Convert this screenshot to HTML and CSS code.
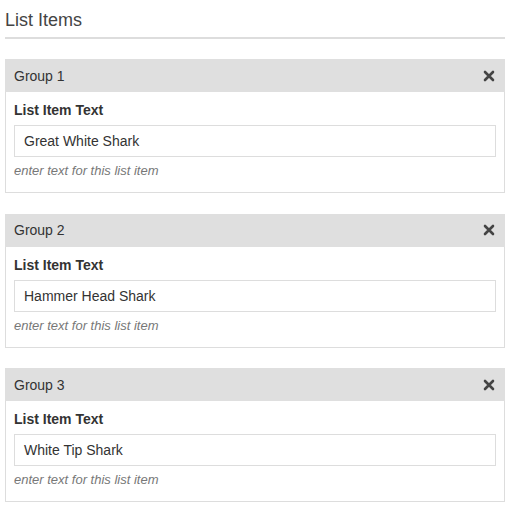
FILE: index.html
```html
<!DOCTYPE html>
<html>
<head>
<meta charset="utf-8">
<link rel="stylesheet" href="styles.css">
</head>
<body>
<div class="page">
  <h2 class="title">List Items</h2>
  <div class="panel">
    <div class="panel-head"><span>Group 1</span><svg class="close" viewBox="0 0 12 12" width="12" height="12"><path d="M2 2L10 10M10 2L2 10" stroke="#444" stroke-width="2.6" stroke-linecap="round"/></svg></div>
    <div class="panel-body">
      <div class="label">List Item Text</div>
      <div class="input">Great White Shark</div>
      <div class="help">enter text for this list item</div>
    </div>
  </div>
  <div class="panel">
    <div class="panel-head"><span>Group 2</span><svg class="close" viewBox="0 0 12 12" width="12" height="12"><path d="M2 2L10 10M10 2L2 10" stroke="#444" stroke-width="2.6" stroke-linecap="round"/></svg></div>
    <div class="panel-body">
      <div class="label">List Item Text</div>
      <div class="input">Hammer Head Shark</div>
      <div class="help">enter text for this list item</div>
    </div>
  </div>
  <div class="panel">
    <div class="panel-head"><span>Group 3</span><svg class="close" viewBox="0 0 12 12" width="12" height="12"><path d="M2 2L10 10M10 2L2 10" stroke="#444" stroke-width="2.6" stroke-linecap="round"/></svg></div>
    <div class="panel-body">
      <div class="label">List Item Text</div>
      <div class="input">White Tip Shark</div>
      <div class="help">enter text for this list item</div>
    </div>
  </div>
</div>
</body>
</html>
```
FILE: styles.css
```css
html, body { margin: 0; padding: 0; background: #fff; }
body { font-family: "Liberation Sans", Arial, sans-serif; color: #333; }
.page { width: 500px; padding: 0 5px; }
.title {
  margin: 0;
  padding-top: 10px;
  font-size: 18px;
  font-weight: normal;
  line-height: 20px;
  color: #444;
  height: 27px;
  border-bottom: 2px solid #ddd;
}
.title + .panel { margin-top: 20px; }
.panel { border: 1px solid #ddd; margin-bottom: 20.5px; }
.panel-head {
  background: #dfdfdf;
  height: 33px;
  margin: -1px -1px 0 -1px;
  padding: 0 10px 0 9px;
  display: flex;
  align-items: center;
  justify-content: space-between;
  font-size: 14px;
  color: #333;
}
.close { display: block; }
.panel-body { padding: 8px 8px 13px 8px; }
.label { font-weight: bold; font-size: 14px; line-height: 20px; margin-bottom: 5px; color: #333; }
.input {
  height: 30px;
  border: 1px solid #ddd;
  padding: 0 9px;
  font-size: 14px;
  line-height: 30px;
  color: #333;
}
.help { margin-top: 5px; font-size: 13px; line-height: 17px; font-style: italic; color: #777; }
```
